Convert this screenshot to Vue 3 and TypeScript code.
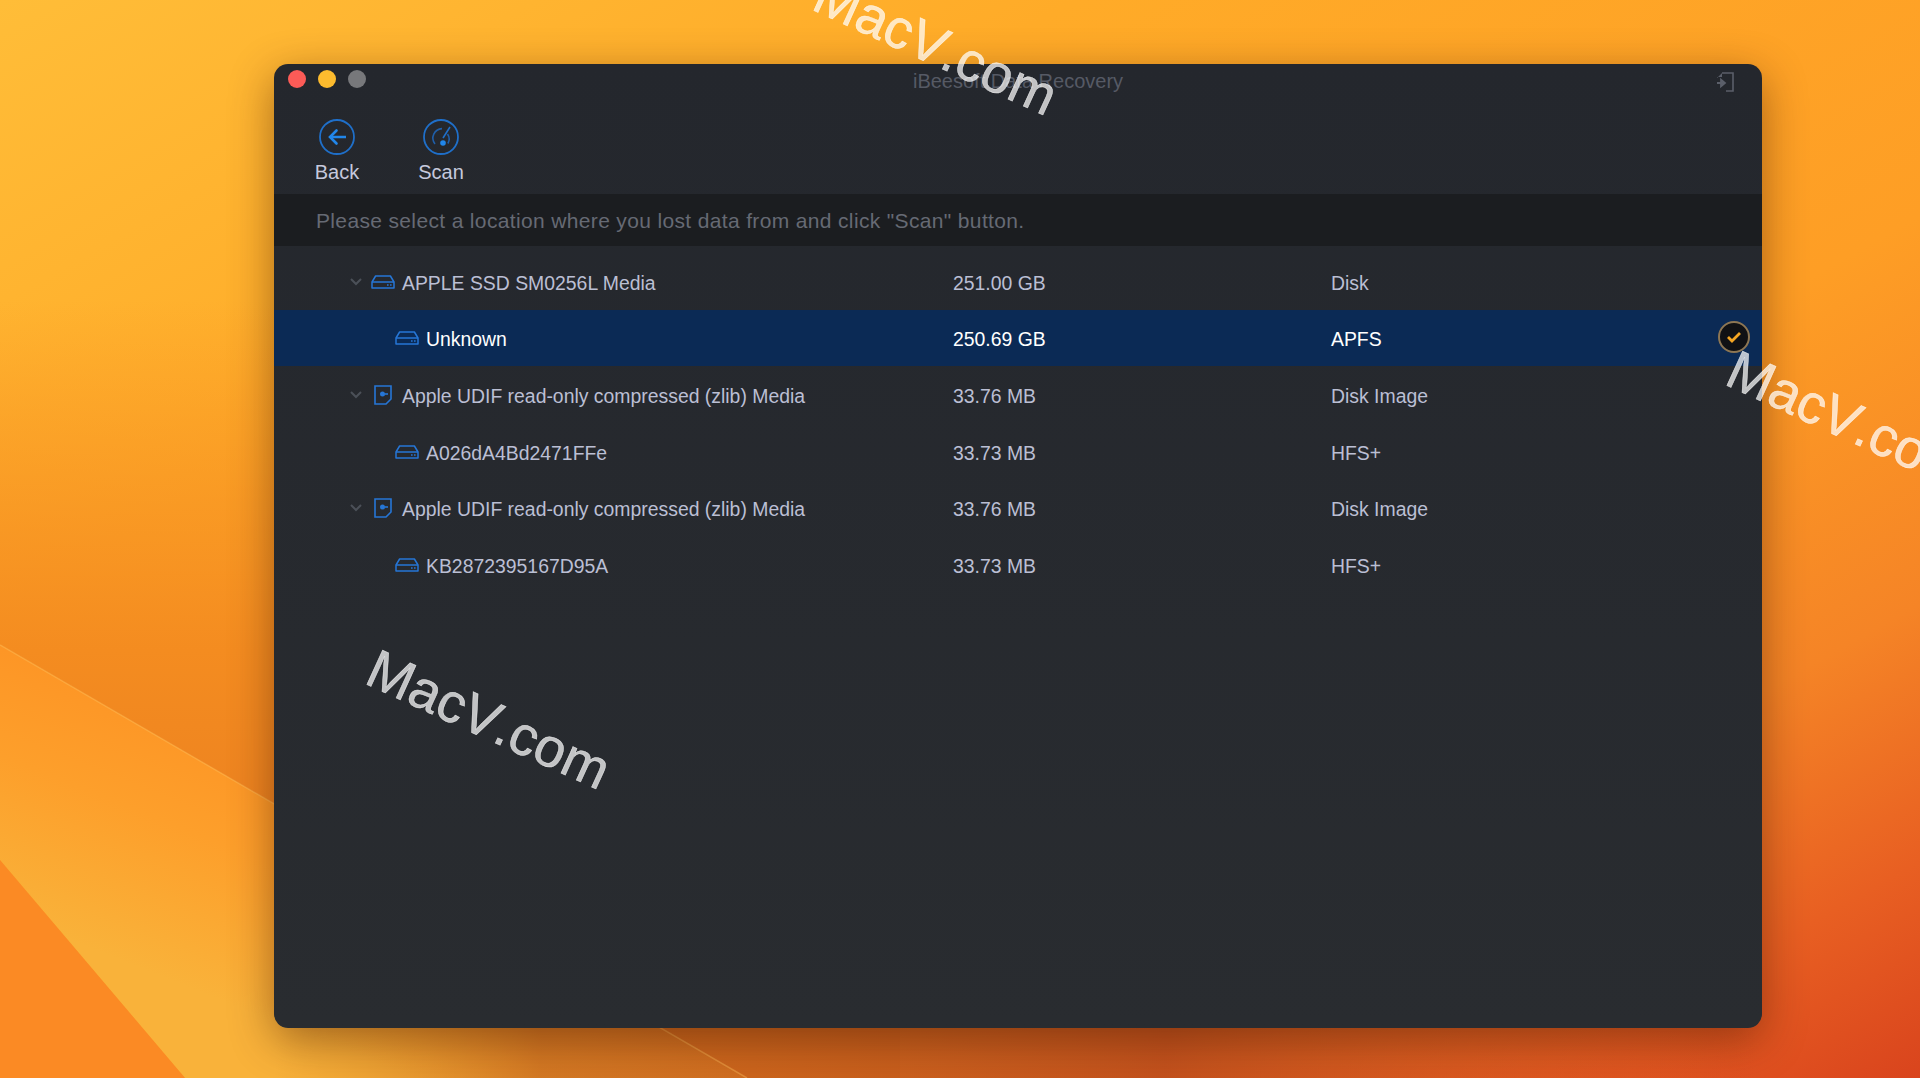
<script setup lang="ts">
interface DiskRow {
  name: string;
  size: string;
  kind: string;
  level: 0 | 1;
  icon: "disk" | "image";
  selected?: boolean;
}

const rows: DiskRow[] = [
  { name: "APPLE SSD SM0256L Media", size: "251.00 GB", kind: "Disk", level: 0, icon: "disk" },
  { name: "Unknown", size: "250.69 GB", kind: "APFS", level: 1, icon: "disk", selected: true },
  { name: "Apple UDIF read-only compressed (zlib) Media", size: "33.76 MB", kind: "Disk Image", level: 0, icon: "image" },
  { name: "A026dA4Bd2471FFe", size: "33.73 MB", kind: "HFS+", level: 1, icon: "disk" },
  { name: "Apple UDIF read-only compressed (zlib) Media", size: "33.76 MB", kind: "Disk Image", level: 0, icon: "image" },
  { name: "KB2872395167D95A", size: "33.73 MB", kind: "HFS+", level: 1, icon: "disk" },
];
</script>

<template>
  <div class="desktop">
    <svg class="wallpaper" viewBox="0 0 1920 1078" preserveAspectRatio="none" aria-hidden="true">
      <defs>
        <linearGradient id="wall-base" x1="0" y1="0" x2="1" y2="1">
          <stop offset="0" stop-color="#ffbd38" />
          <stop offset="0.28" stop-color="#ffab28" />
          <stop offset="0.6" stop-color="#fe9e25" />
          <stop offset="0.78" stop-color="#f58426" />
          <stop offset="0.9" stop-color="#e85f22" />
          <stop offset="1" stop-color="#d9441d" />
        </linearGradient>
        <linearGradient id="wall-left" gradientUnits="userSpaceOnUse" x1="0" y1="300" x2="0" y2="800">
          <stop offset="0" stop-color="#f68f22" stop-opacity="0" />
          <stop offset="0.7" stop-color="#f48c20" />
          <stop offset="1" stop-color="#ee8420" />
        </linearGradient>
        <linearGradient id="wall-band" gradientUnits="userSpaceOnUse" x1="90" y1="600" x2="-30" y2="900">
          <stop offset="0" stop-color="#fd8f22" />
          <stop offset="0.55" stop-color="#fd9f2b" />
          <stop offset="1" stop-color="#f9b23a" />
        </linearGradient>
        <linearGradient id="wall-foot" gradientUnits="userSpaceOnUse" x1="274" y1="0" x2="1760" y2="0">
          <stop offset="0" stop-color="#d6801f" stop-opacity="0" />
          <stop offset="0.18" stop-color="#c4641c" stop-opacity="0.7" />
          <stop offset="0.6" stop-color="#b4431a" stop-opacity="0.75" />
          <stop offset="1" stop-color="#c9461c" stop-opacity="0" />
        </linearGradient>
      </defs>
      <rect width="1920" height="1078" fill="url(#wall-base)" />
      <polygon points="0,300 900,300 900,1078 747,1078 0,645" fill="url(#wall-left)" />
      <polygon points="0,645 747,1078 185,1078 0,860" fill="url(#wall-band)" />
      <polygon points="0,860 185,1078 0,1078" fill="#fb8a24" />
      <rect x="274" y="1020" width="1486" height="58" fill="url(#wall-foot)" />
      <line x1="0" y1="645" x2="747" y2="1078" stroke="#ffc060" stroke-opacity="0.4" stroke-width="1.5" />
    </svg>

    <div class="window">
      <div class="titlebar">
        <div class="lights">
          <span class="light light--close" />
          <span class="light light--min" />
          <span class="light light--max" />
        </div>
        <span class="title">iBeesoft Data Recovery</span>
        <svg class="export-icon" width="18" height="20" viewBox="0 0 18 20" fill="none">
          <path d="M6 1h11v18H10" stroke="#5b5f6a" stroke-width="1.6" />
          <path d="M1 6l5-5v4H1z" fill="#5b5f6a" />
          <path d="M1 11h6M5 7.6L9 11l-4 3.4z" stroke="#5b5f6a" stroke-width="1.8" fill="#5b5f6a" />
        </svg>
      </div>

      <div class="toolbar">
        <div class="tool">
          <svg width="36" height="36" viewBox="0 0 36 36" fill="none">
            <circle cx="18" cy="18" r="17" stroke="#1f6fc9" stroke-width="1.8" />
            <path d="M27 18H12" stroke="#2186ea" stroke-width="2.6" />
            <path d="M17.5 11.5L11 18l6.5 6.5" stroke="#2186ea" stroke-width="2.6" stroke-linecap="round" />
          </svg>
          <span>Back</span>
        </div>
        <div class="tool">
          <svg width="36" height="36" viewBox="0 0 36 36" fill="none">
            <circle cx="18" cy="18" r="17" stroke="#1f6fc9" stroke-width="1.8" />
            <path d="M12 25a9.5 9.5 0 0 1 7-15.4" stroke="#1f5ea8" stroke-width="1.6" />
            <path d="M24.5 15a9 9 0 0 1 .4 9.5" stroke="#1f5ea8" stroke-width="1.6" />
            <path d="M20 19l7-11" stroke="#1f6fc9" stroke-width="1.6" />
            <circle cx="20" cy="24" r="2.8" fill="#2186ea" />
          </svg>
          <span>Scan</span>
        </div>
      </div>

      <div class="notice">Please select a location where you lost data from and click "Scan" button.</div>

      <div class="list">
        <div
          v-for="(row, i) in rows"
          :key="i"
          class="row"
          :class="{ 'row--selected': row.selected, 'row--child': row.level === 1 }"
        >
          <div class="row__name">
            <svg v-if="row.level === 0" class="chevron" width="12" height="8" viewBox="0 0 12 8" fill="none">
              <path d="M1 1l5 5 5-5" stroke="#4b5058" stroke-width="2" />
            </svg>
            <span class="row__icon">
              <svg v-if="row.icon === 'disk'" width="24" height="14" viewBox="0 0 24 14" fill="none">
                <path d="M1 7l3.6-6h14.8L23 7v6H1z" stroke="#2676d6" stroke-width="1.5" stroke-linejoin="round" />
                <path d="M1 7h22" stroke="#2676d6" stroke-width="1.5" />
                <path d="M16 10h1.6M19 10h1.6" stroke="#2676d6" stroke-width="1.5" />
              </svg>
              <svg v-else width="18" height="20" viewBox="0 0 18 20" fill="none">
                <path d="M1 1h16v13l-5 5H1z" stroke="#2676d6" stroke-width="1.6" />
                <circle cx="8.5" cy="9" r="2.5" fill="#2676d6" />
                <path d="M11 9h3" stroke="#2676d6" stroke-width="1.6" />
              </svg>
            </span>
            <span>{{ row.name }}</span>
          </div>
          <div>{{ row.size }}</div>
          <div>{{ row.kind }}</div>
          <span v-if="row.selected" class="check">
            <svg width="16" height="12" viewBox="0 0 16 12" fill="none">
              <path d="M2 6l4 4 8-8" stroke="#f5a623" stroke-width="2.8" />
            </svg>
          </span>
        </div>
      </div>
    </div>

    <span class="watermark watermark--top">MacV.com</span>
    <span class="watermark watermark--right">MacV.com</span>
    <span class="watermark watermark--body">MacV.com</span>
  </div>
</template>

<style>
html,
body {
  margin: 0;
  background: #fd9c25;
}
</style>

<style scoped>
.desktop {
  position: relative;
  width: 1920px;
  height: 1078px;
  overflow: hidden;
  box-sizing: border-box;
  padding: 64px 158px 50px 274px;
  font-family: "Liberation Sans", Arial, sans-serif;
  font-size: 20px;
}

.wallpaper {
  position: absolute;
  inset: 0;
  width: 100%;
  height: 100%;
}

.window {
  position: relative;
  height: 100%;
  display: flex;
  flex-direction: column;
  border-radius: 14px;
  overflow: hidden;
  background: linear-gradient(180deg, #24272d 0%, #292c30 100%);
  box-shadow: 0 12px 44px rgba(60, 20, 0, 0.45);
}

.titlebar {
  position: relative;
  flex: none;
  height: 34px;
  display: flex;
  align-items: center;
  justify-content: center;
}

.lights {
  position: absolute;
  left: 14px;
  top: 6px;
  display: flex;
  gap: 12px;
}

.light {
  width: 18px;
  height: 18px;
  border-radius: 50%;
}

.light--close {
  background: #fc5b57;
}

.light--min {
  background: #fdbb2e;
}

.light--max {
  background: #77787b;
}

.title {
  color: #565a65;
}

.export-icon {
  position: absolute;
  right: 28px;
  top: 8px;
}

.toolbar {
  flex: none;
  height: 96px;
  display: flex;
  padding-left: 11px;
}

.tool {
  width: 104px;
  padding-top: 21px;
  display: flex;
  flex-direction: column;
  align-items: center;
  gap: 6px;
  color: #c6c9dd;
  line-height: 23px;
}

.notice {
  flex: none;
  height: 52px;
  line-height: 54px;
  padding-left: 42px;
  background: #1b1d20;
  color: #666a74;
  font-size: 21px;
  letter-spacing: 0.35px;
}

.list {
  padding-top: 7px;
}

.row {
  position: relative;
  box-sizing: border-box;
  height: 56.6px;
  padding-top: 4px;
  display: grid;
  grid-template-columns: 679px 378px 1fr;
  align-items: center;
  color: #bbbfd4;
  font-size: 19.4px;
}

.row--selected {
  background: #0b2a55;
  color: #fff;
}

.row__name {
  display: flex;
  align-items: center;
  padding-left: 76px;
}

.row--child .row__name {
  padding-left: 121px;
}

.chevron {
  margin-right: 9px;
  margin-top: -3px;
}

.row__icon {
  width: 24px;
  margin-right: 7px;
  margin-top: -3px;
  display: flex;
  justify-content: center;
}

.check {
  position: absolute;
  right: 12px;
  top: 11px;
  box-sizing: border-box;
  width: 32px;
  height: 32px;
  border-radius: 50%;
  background: #101114;
  border: 2px solid #8d7653;
  display: flex;
  align-items: center;
  justify-content: center;
}

.watermark {
  position: absolute;
  font-size: 55px;
  line-height: 1;
  white-space: nowrap;
  font-kerning: none;
  color: rgba(255, 255, 255, 0.72);
  -webkit-text-stroke: 0.5px rgba(255, 255, 255, 0.72);
  transform: rotate(24.5deg);
  transform-origin: 0 100%;
}

.watermark--top {
  left: 806px;
  top: -38px;
}

.watermark--right {
  left: 1719px;
  top: 337px;
}

.watermark--body {
  left: 359px;
  top: 636px;
}
</style>
